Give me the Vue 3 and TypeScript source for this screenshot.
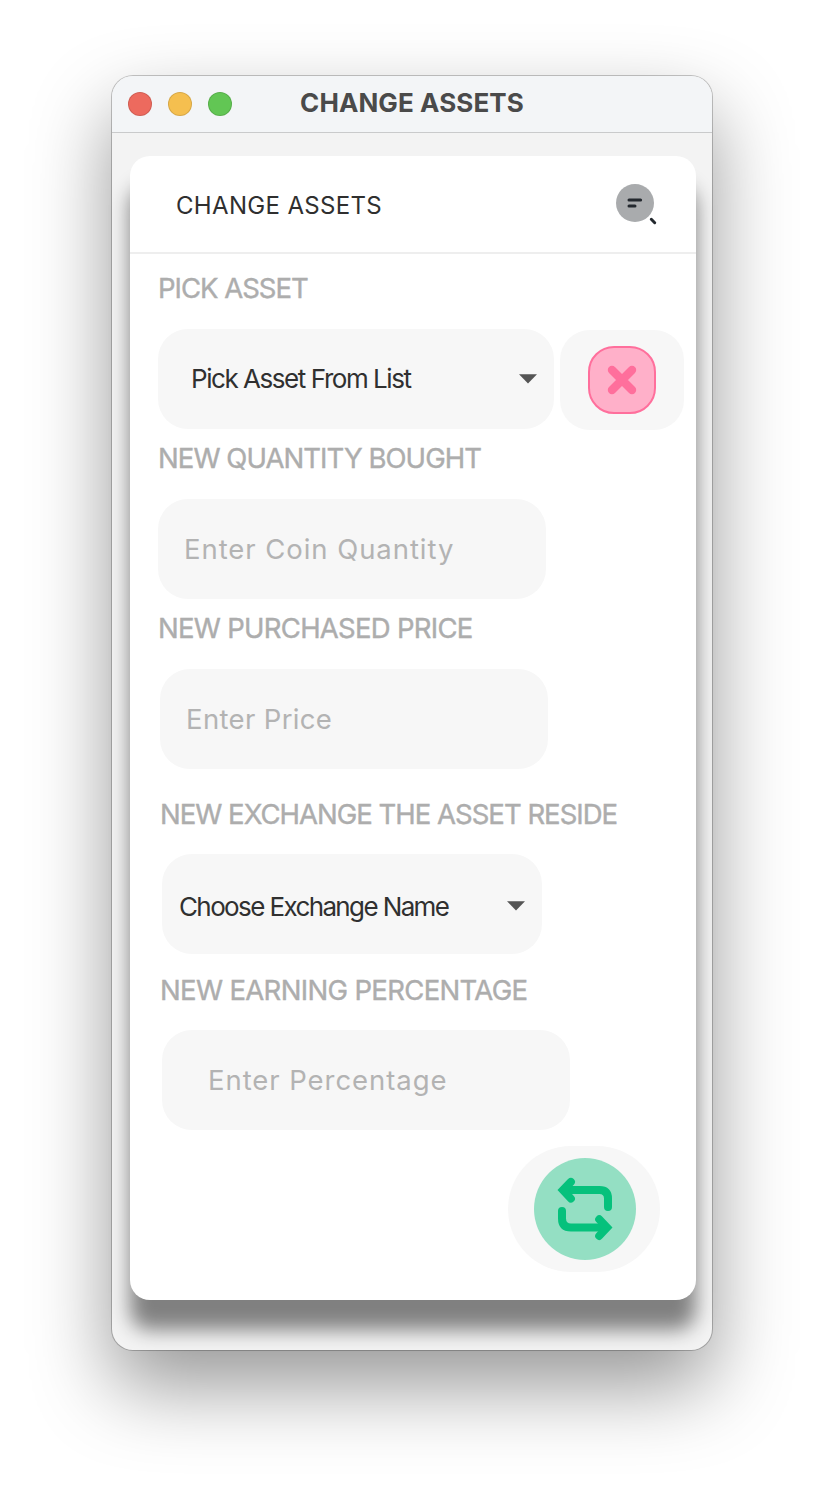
<script setup lang="ts">
interface Field {
  key: string
  label: string
  text: string
  kind: 'select' | 'input'
}

const fields: Field[] = [
  { key: 'asset', label: 'PICK ASSET', text: 'Pick Asset From List', kind: 'select' },
  { key: 'quantity', label: 'NEW QUANTITY BOUGHT', text: 'Enter Coin Quantity', kind: 'input' },
  { key: 'price', label: 'NEW PURCHASED PRICE', text: 'Enter Price', kind: 'input' },
  { key: 'exchange', label: 'NEW EXCHANGE THE ASSET RESIDE', text: 'Choose Exchange Name', kind: 'select' },
  { key: 'percentage', label: 'NEW EARNING PERCENTAGE', text: 'Enter Percentage', kind: 'input' },
]
</script>

<template>
  <main class="desktop">
    <section class="window">
      <header class="titlebar">
        <div class="lights">
          <span class="light red"></span>
          <span class="light yellow"></span>
          <span class="light green"></span>
        </div>
        <h1 class="title">CHANGE ASSETS</h1>
      </header>

      <div class="card">
        <div class="card-head">
          <h2 class="card-title">CHANGE ASSETS</h2>
          <svg class="search" viewBox="0 0 42 42" width="42" height="42">
            <circle cx="19" cy="19" r="19" fill="#a9abad" />
            <path d="M13 16H24.6M13 22H19M35.3 35.3L38.7 38.7" fill="none" stroke="#23282e" stroke-width="3" stroke-linecap="round" />
          </svg>
        </div>

        <div v-for="f in fields" :key="f.key" class="row" :class="f.key">
          <div class="label">{{ f.label }}</div>
          <div class="controls">
            <div class="field" :class="f.kind">
              <span class="field-text">{{ f.text }}</span>
              <svg v-if="f.kind === 'select'" class="caret" viewBox="0 0 18 10" width="18" height="10">
                <path d="M0 0.2H18L9 9.6Z" fill="#555" />
              </svg>
            </div>
            <button v-if="f.key === 'asset'" class="clear" type="button" aria-label="Clear">
              <svg viewBox="0 0 68 68" width="68" height="68">
                <rect x="1" y="1" width="66" height="66" rx="25" fill="#ffb0c9" stroke="#ff6f9c" stroke-width="2" />
                <path d="M24 24L44 44M44 24L24 44" stroke="#ff6f9c" stroke-width="8.4" stroke-linecap="round" />
              </svg>
            </button>
          </div>
        </div>

        <button class="submit" type="button" aria-label="Change">
          <svg viewBox="0 0 102 102" width="102" height="102">
            <circle cx="51" cy="51" r="51" fill="#94dfc3" />
            <g fill="none" stroke="#06c17c" stroke-width="8" stroke-linecap="round">
              <path d="M30 32H65.5Q74 32 74 40.5V49" />
              <path d="M28 53V60.5Q28 69.5 37 69.5H72" />
            </g>
            <g fill="#06c17c" stroke="#06c17c" stroke-width="8" stroke-linecap="round">
              <path d="M36.9 23.9L29 32L36.9 40.6" />
              <path d="M65.2 61.3L73 69.5L65.2 77.9" />
            </g>
          </svg>
        </button>
      </div>
    </section>
  </main>
</template>

<style>
body {
  margin: 0;
  background: #fff;
}
</style>

<style scoped>
.desktop {
  box-sizing: border-box;
  width: 824px;
  height: 1498px;
  padding: 76px 112px 0;
  overflow: hidden;
  font-family: Inter, "Liberation Sans", sans-serif;
}
.window {
  width: 600px;
  height: 1274px;
  border-radius: 21px;
  background: #f3f3f3;
  box-shadow:
    0 0 0 1px rgba(0, 0, 0, 0.22),
    0 36px 80px rgba(0, 0, 0, 0.41);
}
.titlebar {
  box-sizing: border-box;
  display: grid;
  grid-template-columns: 150px 1fr 150px;
  align-items: center;
  height: 57px;
  border-bottom: 1px solid #c9cacb;
  border-radius: 21px 21px 0 0;
  background: #f3f5f7;
}
.lights {
  display: flex;
  gap: 16px;
  padding-left: 16px;
}
.light {
  box-sizing: border-box;
  width: 24px;
  height: 24px;
  border: 1px solid rgba(0, 0, 0, 0.12);
  border-radius: 50%;
}
.red { background: #ed6a5e; }
.yellow { background: #f5bf4f; }
.green { background: #62c654; }
.title {
  margin: 0;
  padding-bottom: 3px;
  color: #4a4a4a;
  font-size: 26px;
  font-weight: 700;
  line-height: 32px;
  letter-spacing: 0.1px;
  text-align: center;
  white-space: nowrap;
}
.card {
  box-sizing: border-box;
  display: flex;
  flex-direction: column;
  width: 566px;
  height: 1144px;
  margin: 23px 0 0 18px;
  border-radius: 20px;
  background: #fff;
  box-shadow: 0 30px 20px #808080;
}
.card-head {
  box-sizing: border-box;
  display: flex;
  justify-content: space-between;
  height: 98px;
  padding: 28px 38px 0 46px;
  border-bottom: 2px solid #eee;
}
.card-title {
  margin: 6px 0 0;
  color: #2f2f2f;
  font-size: 24px;
  font-weight: 400;
  line-height: 32px;
  letter-spacing: 0.33px;
}
.row { padding-left: 28px; }
.label {
  height: 40px;
  color: #adadad;
  font-size: 27.5px;
  line-height: 40px;
  white-space: nowrap;
  -webkit-text-stroke: 0.4px #adadad;
}
.controls {
  display: flex;
  gap: 6px;
  margin-top: 21px;
}
.field {
  box-sizing: border-box;
  display: flex;
  align-items: center;
  justify-content: space-between;
  height: 100px;
  border-radius: 30px;
  background: #f7f7f7;
  white-space: nowrap;
}
.select {
  color: #303030;
  font-size: 26px;
}
.input {
  color: #b3b3b3;
  font-size: 27.5px;
}

.asset { padding-top: 14px; }
.asset .label { letter-spacing: -1px; }
.asset .field { width: 396px; padding: 0 17px 0 33px; letter-spacing: -1.45px; }
.asset .field-text { padding-bottom: 2px; }

.quantity { padding-top: 8px; }
.quantity .label { letter-spacing: -0.93px; }
.quantity .field { width: 388px; padding-left: 26px; letter-spacing: 0.94px; }

.price { padding-top: 9px; }
.price .label { letter-spacing: -0.72px; }
.price .field { width: 388px; margin-left: 2px; padding-left: 26px; letter-spacing: 0.35px; }

.exchange { padding: 25px 0 0 30px; }
.exchange .label { letter-spacing: -0.99px; }
.exchange .controls { margin-top: 20px; }
.exchange .field { width: 380px; margin-left: 2px; padding: 4px 17px 0; letter-spacing: -1.62px; }

.percentage { padding: 16px 0 0 30px; }
.percentage .label { letter-spacing: -0.66px; }
.percentage .controls { margin-top: 20px; }
.percentage .field { width: 408px; margin-left: 2px; padding-left: 46px; letter-spacing: 0.94px; }

.clear,
.submit {
  display: flex;
  align-items: center;
  justify-content: center;
  padding: 0;
  border: 0;
  background: #f7f7f7;
}
.clear {
  width: 124px;
  height: 100px;
  margin-top: 1px;
  border-radius: 30px;
}
.submit {
  align-self: flex-end;
  width: 152px;
  height: 126px;
  margin: 16px 36px 0 0;
  padding-left: 2px;
  border-radius: 63px;
}
</style>
